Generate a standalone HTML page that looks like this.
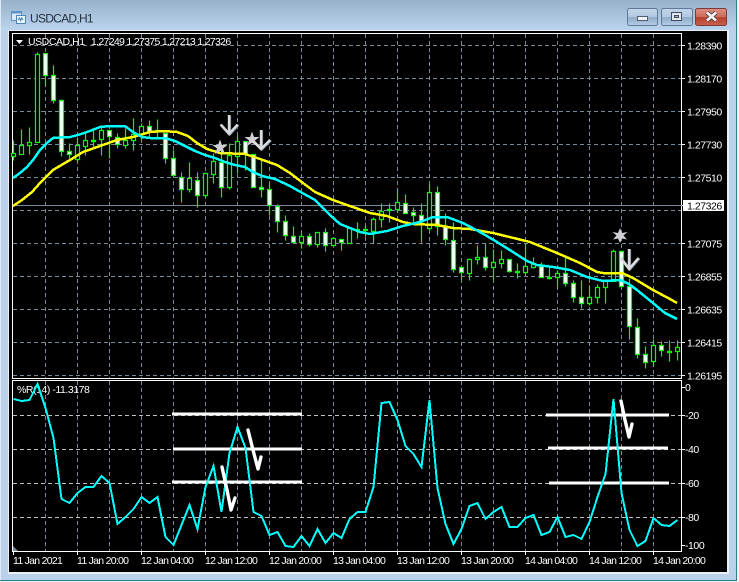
<!DOCTYPE html>
<html lang="en">
<head>
<meta charset="utf-8">
<title>USDCAD,H1</title>
<style>
html,body{margin:0;padding:0;background:#b9d1ea}
body{width:739px;height:582px;overflow:hidden;position:relative}
svg{display:block;position:absolute;left:0;top:0}
text{font-family:"Liberation Sans",sans-serif;font-size:10.5px;fill:#fff;letter-spacing:-.45px}
text.t{letter-spacing:-.72px}
text.v{letter-spacing:-.68px}
</style>
</head>
<body>
<svg width="739" height="582" viewBox="0 0 739 582" xmlns="http://www.w3.org/2000/svg">
<defs>
<linearGradient id="tb" x1="0" y1="0" x2="0" y2="1"><stop offset="0" stop-color="#97b1cb"/><stop offset="1" stop-color="#bad4ee"/></linearGradient>
<linearGradient id="bt" x1="0" y1="0" x2="0" y2="1"><stop offset="0" stop-color="#c3d6ea"/><stop offset=".5" stop-color="#b0c8e0"/><stop offset=".52" stop-color="#8fabc8"/><stop offset="1" stop-color="#b5cde6"/></linearGradient>
<linearGradient id="cl" x1="0" y1="0" x2="0" y2="1"><stop offset="0" stop-color="#dc9084"/><stop offset=".5" stop-color="#cd6a5b"/><stop offset=".52" stop-color="#b83f2e"/><stop offset="1" stop-color="#c9604e"/></linearGradient>
</defs>
<!-- window -->
<rect width="739" height="582" fill="#b9d1ea"/>
<rect width="739" height="30" fill="url(#tb)"/>
<rect x="0" y="0" width="1" height="582" fill="#dfe9f3"/>
<rect x="736" y="0" width="1" height="582" fill="#2d7c8c"/>
<rect x="737" y="0" width="2" height="582" fill="#f0f0f0"/>
<rect x="0" y="580" width="737" height="1" fill="#2d7c8c"/>
<rect x="0" y="581" width="739" height="1" fill="#f0f0f0"/>
<rect x="8" y="30" width="721" height="544" fill="#e9eef4"/>
<rect x="9" y="31" width="718" height="541" fill="#000"/>

<!-- title icon -->
<rect x="11.5" y="11.5" width="10" height="9" fill="#dbe9f7" stroke="#5f93c4"/>
<rect x="11.5" y="11.5" width="10" height="2" fill="#5f93c4"/>
<rect x="16.5" y="15.5" width="9" height="8" fill="#eaf3fb" stroke="#4c86bd"/>
<path d="M18 20l1.5-2 1 2.5 1.2-2.5 1.3 2" fill="none" stroke="#3f7fb8"/>
<text x="30" y="22.5" style="font-size:12px;fill:#26323e;letter-spacing:-.72px">USDCAD,H1</text>

<!-- window buttons -->
<rect x="627.5" y="8.5" width="30" height="17" rx="2" fill="url(#bt)" stroke="#5f7a99"/>
<rect x="637.5" y="16.5" width="10" height="4" fill="#f4f4f4" stroke="#4e5f73"/>
<rect x="661.5" y="8.5" width="31" height="17" rx="2" fill="url(#bt)" stroke="#5f7a99"/>
<rect x="671.5" y="12.5" width="10" height="8" fill="#dfe6ee" stroke="#3f4f63"/>
<rect x="674.5" y="15.5" width="4" height="2" fill="#9eb3c9" stroke="#3f4f63"/>
<rect x="695.5" y="8.5" width="31" height="17" rx="2" fill="url(#cl)" stroke="#7d3a3a"/>
<path d="M707 12.500l9 8M716 12.500l-9 8" stroke="#4a3a3a" stroke-width="4.500" fill="none"/>
<path d="M707 12.500l9 8M716 12.500l-9 8" stroke="#f2f2f2" stroke-width="2.800" fill="none"/>

<!-- frames -->
<path d="M12.500 378.500V33.500H681.500V378.500" fill="none" stroke="#fff"/>
<path d="M12 378.500H682M12 380.500H682" stroke="#fff" fill="none"/>
<path d="M12.500 380V551.500H681.500V380" fill="none" stroke="#fff"/>
<path d="M13 551V546L18 551Z" fill="#778899"/>

<!-- grid -->
<g stroke="#778899" fill="none" stroke-dasharray="4 3" shape-rendering="crispEdges">
<path d="M45.500 34V378M77.500 34V378M109.500 34V378M141.500 34V378M173.500 34V378M205.500 34V378M237.500 34V378M269.500 34V378M301.500 34V378M333.500 34V378M365.500 34V378M397.500 34V378M429.500 34V378M461.500 34V378M493.500 34V378M525.500 34V378M557.500 34V378M589.500 34V378M621.500 34V378M653.500 34V378"/>
<path d="M13 45.500H681M13 78.500H681M13 111.500H681M13 144.500H681M13 177.500H681M13 210.500H681M13 243.500H681M13 276.500H681M13 309.500H681M13 342.500H681M13 375.500H681"/>
<path d="M45.500 381V551M77.500 381V551M109.500 381V551M141.500 381V551M173.500 381V551M205.500 381V551M237.500 381V551M269.500 381V551M301.500 381V551M333.500 381V551M365.500 381V551M397.500 381V551M429.500 381V551M461.500 381V551M493.500 381V551M525.500 381V551M557.500 381V551M589.500 381V551M621.500 381V551M653.500 381V551"/>
</g>
<g stroke="#c0c0c0" fill="none" stroke-dasharray="4 3" shape-rendering="crispEdges">
<path d="M13 415.500H681M13 449.500H681M13 483.500H681M13 517.500H681"/>
</g>
<path d="M13 205.500H682" stroke="#778899" fill="none"/>

<!-- candles -->
<path transform="translate(0,.5)" fill="none" stroke="#00ff00" stroke-width="1.200" d="M13.500 140V160M21.500 129V154M29.500 127V154M37.500 52V142M45.500 53V86M53.500 65V103M61.500 99V156M69.500 143V158M77.500 137V162M85.500 132V155M93.500 130V147M101.500 125V155M109.500 130V158M117.500 133V148M125.500 128V148M133.500 118V150M141.500 123V140M149.500 120V137M157.500 119V137M165.500 133V163M173.500 150V175M181.500 172V202M189.500 162V192M197.500 172V207M205.500 172V197M213.500 153V183M221.500 150V197M229.500 143V189M237.500 135V173M245.500 141V170M253.500 154V187M261.500 160V197M269.500 183V215M277.500 204V232M285.500 215V240M293.500 226V243M301.500 233V248M309.500 233V246M317.500 232V247M325.500 228V251M333.500 238V245M341.500 239V250M349.500 228V243M357.500 222V238M365.500 225V236M373.500 217V243M381.500 203V227M389.500 203V222M397.500 188V212M405.500 194V213M413.500 207V225M421.500 203V242M429.500 183V230M437.500 186V235M445.500 213V245M453.500 222V272M461.500 267V280M469.500 258V280M477.500 245V264M485.500 243V270M493.500 249V280M501.500 250V268M509.500 259V272M517.500 263V278M525.500 243V275M533.500 257V268M541.500 262V277M549.500 267V279M557.500 270V287M565.500 257V286M573.500 280V302M581.500 280V308M589.500 285V305M597.500 284V303M605.500 279V303M613.500 249V281M621.500 250V286M629.500 278V339M637.500 318V358M645.500 346V368M653.500 339V366M661.500 341V356M669.500 340V361M677.500 340V360"/>
<path transform="translate(0,.5)" fill="#000" stroke="#00ff00" stroke-width="1.200" d="M11.500 153h4v3h-4zM19.500 145h4v9h-4zM27.500 142h4v3h-4zM35.500 54h4v88h-4zM75.500 145h4v14h-4zM83.500 140h4v6h-4zM91.500 140h4v1h-4zM99.500 130h4v9h-4zM123.500 140h4v5h-4zM131.500 134h4v6h-4zM139.500 126h4v8h-4zM155.500 130h4v1h-4zM187.500 178h4v11h-4zM203.500 173h4v22h-4zM211.500 161h4v13h-4zM227.500 155h4v32h-4zM235.500 141h4v15h-4zM299.500 236h4v6h-4zM315.500 232h4v12h-4zM331.500 238h4v7h-4zM347.500 228h4v15h-4zM355.500 229h4v1h-4zM363.500 229h4v1h-4zM371.500 219h4v12h-4zM379.500 211h4v8h-4zM387.500 209h4v1h-4zM395.500 202h4v7h-4zM427.500 192h4v36h-4zM467.500 259h4v14h-4zM475.500 257h4v2h-4zM491.500 262h4v5h-4zM499.500 259h4v4h-4zM523.500 266h4v6h-4zM531.500 264h4v3h-4zM547.500 277h4v1h-4zM555.500 273h4v4h-4zM587.500 297h4v6h-4zM595.500 287h4v10h-4zM603.500 281h4v6h-4zM611.500 251h4v30h-4zM651.500 345h4v16h-4zM667.500 351h4v1h-4zM675.500 347h4v4h-4z"/>
<path transform="translate(0,.5)" fill="#fff" stroke="#00ff00" stroke-width="1.200" d="M43.500 53h4v22h-4zM51.500 75h4v25h-4zM59.500 100h4v51h-4zM67.500 151h4v3h-4zM107.500 130h4v6h-4zM115.500 137h4v7h-4zM147.500 126h4v5h-4zM163.500 133h4v25h-4zM171.500 158h4v17h-4zM179.500 177h4v12h-4zM195.500 180h4v15h-4zM219.500 162h4v25h-4zM243.500 141h4v13h-4zM251.500 154h4v33h-4zM259.500 187h4v2h-4zM267.500 189h4v16h-4zM275.500 206h4v15h-4zM283.500 221h4v14h-4zM291.500 236h4v6h-4zM307.500 236h4v8h-4zM323.500 232h4v13h-4zM339.500 239h4v3h-4zM403.500 203h4v10h-4zM411.500 212h4v3h-4zM419.500 215h4v6h-4zM435.500 192h4v34h-4zM443.500 226h4v13h-4zM451.500 240h4v29h-4zM459.500 267h4v5h-4zM483.500 257h4v10h-4zM507.500 259h4v12h-4zM515.500 271h4v1h-4zM539.500 266h4v11h-4zM563.500 273h4v10h-4zM571.500 283h4v14h-4zM579.500 297h4v6h-4zM619.500 251h4v35h-4zM627.500 286h4v40h-4zM635.500 327h4v27h-4zM643.500 354h4v8h-4zM659.500 345h4v5h-4z"/>

<!-- moving averages -->
<polyline fill="none" stroke="#ff0" stroke-width="2.500" shape-rendering="crispEdges" points="13,206 22,200 32,192 40,183 53,170 70,160 83,152 100,146 117,140 133,137 150,132 163,131 177,132 188,136 197,143 207,149 220,153 245,154 260,159 277,165 290,173 303,183 315,192 333,200 347,205 370,213 387,216 403,222 413,224 437,225 453,228 470,229 493,233 530,242 557,253 580,263 597,272 603,273 622,273 633,278 653,290 670,299 677,303"/>
<polyline fill="none" stroke="#0ff" stroke-width="2.500" shape-rendering="crispEdges" points="13,178 20,173 27,167 33,160 40,150 47,143 53,138 60,137.500 70,137 78,135 90,131 100,127 110,126 125,126 133,132 142,137 150,138 165,138 175,141 185,146 195,151 205,155 215,158 225,162 235,165 245,167 253,172 262,176 275,179 290,186 297,190 315,200 320,205 330,215 340,224 350,228 360,232 370,234 387,231 403,226 420,222 433,217 447,217 463,223 480,232 497,242 513,252 527,261 537,265 553,267 570,270 587,277 603,281 620,280 629,284 637,290 653,303 665,313 677,319"/>

<!-- price tag -->
<rect x="683" y="200" width="41" height="11" fill="#fff"/>
<path d="M682 205.500H685" stroke="#fff"/>
<text x="687" y="209.500" style="fill:#000">1.27326</text>

<!-- stars and arrows -->
<g fill="#cfcfd2">
<polygon points="220,139.500 222,145 227.500,145 223,148.500 225,154 220,150.800 215,154 217,148.500 212.500,145 218,145"/>
<polygon points="252,131.500 254,137 259.500,137 255,140.500 257,146 252,142.800 247,146 249,140.500 244.500,137 250,137"/>
<polygon points="620,228 622,233 627.500,232 623.500,235.500 627,239.500 622,238.500 620,243 618,238.500 613,239.500 616.500,235.500 612.500,232 618,233"/>
</g>
<g fill="none" stroke-linejoin="miter">
<g stroke="#7f93aa" stroke-width="2.400" transform="translate(.9,.3)"><path d="M229 115V134M220.500 124.500L229 134L237.500 124.500"/><path d="M261 130V149M252 140L261 149L270 140"/><path d="M629 249V269M620.500 258L629 269L638.500 258"/></g>
<g stroke="#dcdcdc" stroke-width="2.400"><path d="M229 115V134M220.500 124.500L229 134L237.500 124.500"/><path d="M261 130V149M252 140L261 149L270 140"/><path d="M629 249V269M620.500 258L629 269L638.500 258"/></g>
</g>

<!-- right axis labels -->
<g stroke="#fff" shape-rendering="crispEdges"><path d="M682 45.500h3M682 78.500h3M682 111.500h3M682 144.500h3M682 177.500h3M682 243.500h3M682 276.500h3M682 309.500h3M682 342.500h3M682 375.500h3M682 387.500h3M682 415.500h3M682 449.500h3M682 483.500h3M682 517.500h3M682 545.500h3"/></g>
<text x="687" y="49.500">1.28390</text>
<text x="687" y="82.500">1.28170</text>
<text x="687" y="115.500">1.27950</text>
<text x="687" y="148.500">1.27730</text>
<text x="687" y="181.500">1.27510</text>
<text x="687" y="247.500">1.27075</text>
<text x="687" y="280.500">1.26855</text>
<text x="687" y="313.500">1.26635</text>
<text x="687" y="346.500">1.26415</text>
<text x="687" y="379.500">1.26195</text>
<text x="685" y="391">0</text>
<text x="685" y="419">-20</text>
<text x="685" y="453">-40</text>
<text x="685" y="487">-60</text>
<text x="685" y="521">-80</text>
<text x="685" y="549">-100</text>

<!-- top labels -->
<polygon points="16,40 23,40 19.500,44" fill="#fff"/>
<text x="28" y="45">USDCAD,H1</text>
<text x="91" y="45" class="v">1.27249 1.27375 1.27213 1.27326</text>
<text x="17" y="393">%R(14) -11.3178</text>

<!-- indicator -->
<path d="M172 414H302M173 449H302M172 482H302M546 415H669M548 448H668M549 483H669" stroke="#fff" stroke-width="3" fill="none"/>
<polyline fill="none" stroke="#0ff" stroke-width="2" shape-rendering="crispEdges" points="13.500,399 21.500,401 29.500,400 37.500,384 45.500,408 53.500,438 61.500,499 69.500,503 77.500,493 85.500,487 93.500,487 101.500,476 109.500,483 117.500,524 125.500,517 133.500,509 141.500,497 149.500,503 157.500,497 165.500,537 173.500,545 181.500,525 189.500,505 197.500,529 205.500,487 213.500,466 221.500,512 229.500,453 237.500,427 245.500,448 253.500,512 261.500,516 269.500,535 277.500,532 285.500,546 293.500,547 301.500,536 309.500,546 317.500,529 325.500,543 333.500,533 341.500,538 349.500,519 357.500,512 365.500,512 373.500,487 381.500,403 389.500,402 397.500,420 405.500,446 413.500,454 421.500,467 429.500,400 437.500,488 445.500,524 453.500,544 461.500,529 469.500,506 477.500,503 485.500,519 493.500,512 501.500,507 509.500,527 517.500,527 525.500,518 533.500,515 541.500,535 549.500,532 557.500,517 565.500,537 573.500,535 581.500,539 589.500,522 597.500,497 605.500,474 613.500,399 621.500,493 629.500,530 637.500,546 645.500,541 653.500,518 661.500,525 669.500,526 677.500,520"/>
<g fill="none" stroke="#fff" stroke-width="3.400" stroke-linejoin="round" stroke-linecap="round"><path d="M222 467L227 490L231 510L235 498"/><path d="M248 430L253 450L258 469L261 457"/><path d="M621 401L625 420L629 437L632 424"/></g>

<!-- time axis -->
<g stroke="#fff" shape-rendering="crispEdges"><path d="M13.500 551v4M77.500 551v4M141.500 551v4M205.500 551v4M269.500 551v4M333.500 551v4M397.500 551v4M461.500 551v4M525.500 551v4M589.500 551v4M653.500 551v4"/></g>
<text x="13" y="564" class="t">11 Jan 2021</text>
<text x="77" y="564" class="t">11 Jan 20:00</text>
<text x="141" y="564" class="t">12 Jan 04:00</text>
<text x="205" y="564" class="t">12 Jan 12:00</text>
<text x="269" y="564" class="t">12 Jan 20:00</text>
<text x="333" y="564" class="t">13 Jan 04:00</text>
<text x="397" y="564" class="t">13 Jan 12:00</text>
<text x="461" y="564" class="t">13 Jan 20:00</text>
<text x="525" y="564" class="t">14 Jan 04:00</text>
<text x="589" y="564" class="t">14 Jan 12:00</text>
<text x="653" y="564" class="t">14 Jan 20:00</text>
</svg>
</body>
</html>
